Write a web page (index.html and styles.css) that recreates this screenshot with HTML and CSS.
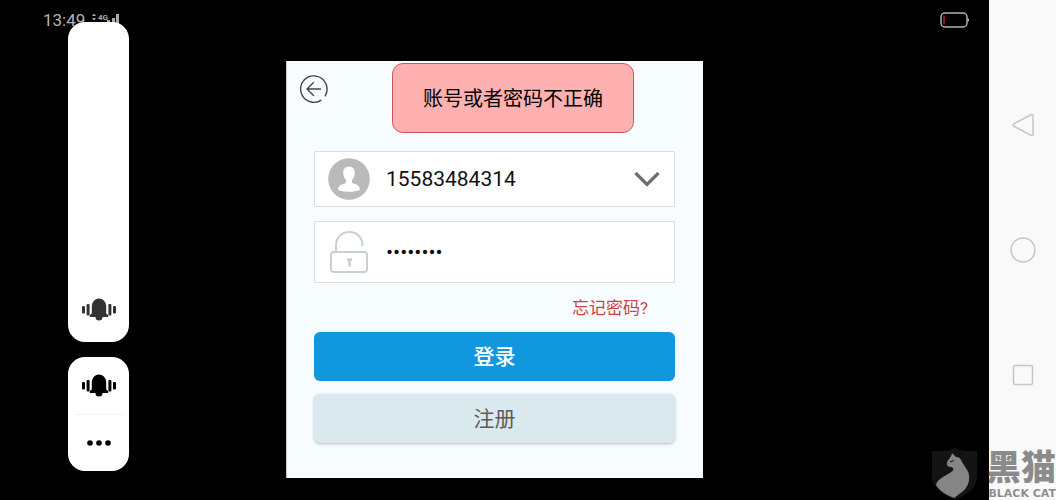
FILE: index.html
```html
<!DOCTYPE html>
<html lang="zh-CN">
<head>
  <meta charset="UTF-8" />
  <meta name="viewport" content="width=device-width, initial-scale=1.0"/>
  <title>登录</title>
  <link rel="stylesheet" href="styles.css">
</head>
<body>

<div class="screen">
  <!-- Status bar -->
  <header class="status-bar">
    <div class="status-left">
      <span class="clock">13:49</span>
      <svg class="signal" width="30" height="16" viewBox="0 0 30 16">
        <path d="M3 4l2-2.500 2 2.500zM3 6l2 2.500 2-2.500z" fill="#aaa"/>
        <text x="9" y="8" class="net">4G</text>
        <path d="M13 11h3v5h-3zM18 8h3v8h-3zM23 6h3v10h-3zM27 2h3v14h-3z" fill="#aaa"/>
      </svg>
    </div>
    <svg class="battery" width="29" height="16" viewBox="0 0 29 16">
      <rect x="1" y="1" width="26" height="14" rx="4" fill="none" stroke="#b4b0b0" stroke-width="1.500"/>
      <path d="M27.500 6v4l1.500-1v-2z" fill="#b4b0b0"/>
      <path d="M4 3.500v9" stroke="#8c1626" stroke-width="2"/>
    </svg>
  </header>

  <!-- Login -->
  <main class="stage">
    <form class="login">
      <div class="login-top">
        <button type="button" class="icon-btn" aria-label="返回">
          <svg width="28" height="28" viewBox="0 0 28 28" fill="none" stroke="#444" stroke-width="1.400" stroke-linecap="round">
            <path d="M25.200 20.800A13.200 13.200 0 1 0 20.800 25.300"/>
            <path d="M20.500 14H7.500M13.500 7.500L7 14l6.500 6.500"/>
          </svg>
        </button>
        <div class="toast" role="alert">账号或者密码不正确</div>
      </div>

      <div class="field">
        <label for="account" aria-label="账号">
          <svg width="42" height="42" viewBox="0 0 42 42">
            <circle cx="21" cy="21" r="20.800" fill="#bababa"/>
            <path d="M21 8.500c3.800 0 6 2.800 5.800 6.700-.1 3-1.300 5.300-2.800 6.500v3c1.200 1.200 7.800 1.300 7.800 6.300 0 1.800-4.800 2.700-10.800 2.700s-10.800-.9-10.800-2.700c0-5 6.600-5.100 7.800-6.300v-3c-1.500-1.200-2.700-3.500-2.800-6.500-.2-3.900 2-6.700 5.800-6.700z" fill="#fff"/>
          </svg>
        </label>
        <input id="account" type="text" value="15583484314">
        <button type="button" class="icon-btn" aria-label="选择账号">
          <svg width="28" height="18" viewBox="0 0 28 18">
            <path d="M2.500 3L14 14.500 25.500 3" fill="none" stroke="#6e6e6e" stroke-width="3.200"/>
          </svg>
        </button>
      </div>

      <div class="field field-password">
        <label for="password" aria-label="密码">
          <svg width="42" height="44" viewBox="0 0 42 44" fill="none" stroke="#c8d1d1" stroke-width="2">
            <rect x="3" y="22" width="36" height="20" rx="3"/>
            <path d="M8 22v-6.500C8 7.500 13.500 2 21.500 2 29 2 34.500 7.500 34.500 16"/>
            <path d="M19 29.500h5M21.500 29.500v7" stroke-width="2.500"/>
          </svg>
        </label>
        <input id="password" type="password" value="12345678">
      </div>

      <a href="#" class="forgot">忘记密码?</a>
      <button type="submit" class="btn btn-login">登录</button>
      <button type="button" class="btn btn-register">注册</button>
    </form>
  </main>

  <!-- Volume panel -->
  <aside class="volume">
    <div class="panel volume-track">
      <svg width="34" height="24" viewBox="0 0 34 24" fill="#333">
        <path d="M9.800 15.500V8a7.200 7.500 0 0 1 14.400 0v7.500l2 1.500v2h-5.700a3.500 3.500 0 0 1-7 0H7.800v-2z"/>
        <rect x="0" y="8" width="3" height="7.500" rx="1"/>
        <rect x="4.600" y="6" width="3" height="11.500" rx="1"/>
        <rect x="26.400" y="6" width="3" height="11.500" rx="1"/>
        <rect x="31" y="8" width="3" height="7.500" rx="1"/>
      </svg>
    </div>
    <div class="panel volume-menu">
      <button type="button" aria-label="铃声">
        <svg width="34" height="24" viewBox="0 0 34 24" fill="#000">
          <path d="M9.800 15.500V8a7.200 7.500 0 0 1 14.400 0v7.500l2 1.500v2h-5.700a3.500 3.500 0 0 1-7 0H7.800v-2z"/>
          <rect x="0" y="8" width="3" height="7.500" rx="1"/>
          <rect x="4.600" y="6" width="3" height="11.500" rx="1"/>
          <rect x="26.400" y="6" width="3" height="11.500" rx="1"/>
          <rect x="31" y="8" width="3" height="7.500" rx="1"/>
        </svg>
      </button>
      <button type="button" aria-label="更多">
        <svg width="26" height="6" viewBox="0 0 26 6">
          <circle cx="4" cy="3" r="2.800"/><circle cx="13" cy="3" r="2.800"/><circle cx="22" cy="3" r="2.800"/>
        </svg>
      </button>
    </div>
  </aside>
</div>

<!-- System navigation -->
<nav class="sys-nav">
  <button type="button" aria-label="后退">
    <svg width="26" height="26" viewBox="0 0 26 26"><path d="M21.500 2.500L3.500 12q-1.500 1 0 2l18 9.500q1.500.5 1.500-1V3.500q0-1.500-1.500-1z"/></svg>
  </button>
  <button type="button" aria-label="主页">
    <svg width="26" height="26" viewBox="0 0 26 26"><circle cx="13" cy="13" r="12"/></svg>
  </button>
  <button type="button" aria-label="任务">
    <svg width="26" height="26" viewBox="0 0 26 26"><rect x="3.500" y="3.500" width="19" height="19" rx="1.500"/></svg>
  </button>
</nav>

<!-- Watermark -->
<div class="watermark">
  <svg width="46" height="52" viewBox="0 0 46 52">
    <path d="M0 3q14 1 23-3 9 4 22 3v25q0 15-22 24Q0 43 0 28z" fill="#151313"/>
    <path d="M20 5l4 4c3 0 4 1 5 3 2 5 7 9 8 15 1 7-2 13-7 17-3 2-5 4-8 6C14 47 8 43 4 37c1-5 7-8 12-11 4-2 6-4 5-6-2-2-6 0-6-4 0-5 4-5 5-11z" fill="#858585"/>
    <path d="M18 14l4-1.500" stroke="#151313"/>
  </svg>
  <div class="brand">
    <span class="brand-cn">黑猫</span>
    <span class="brand-en">BLACK CAT</span>
  </div>
</div>

</body>
</html>
```
FILE: styles.css
```css
* {
  margin: 0;
  padding: 0;
  box-sizing: border-box;
}

body {
  display: flex;
  min-height: 100vh;
  position: relative;
  background: #000;
  font-family: Roboto, "Noto Sans CJK SC", sans-serif;
}

button {
  background: none;
  border: none;
  font-family: inherit;
  cursor: pointer;
}

svg {
  display: block;
}

.screen {
  flex: 1;
  position: relative;
  display: flex;
  flex-direction: column;
}

/* Status bar */
.status-bar {
  display: flex;
  justify-content: space-between;
  align-items: center;
  height: 39px;
  padding: 0 20px 0 43px;
}

.status-left {
  display: flex;
  align-items: center;
  gap: 4px;
}

.clock {
  color: #b4b4b4;
  font-size: 17px;
}

.net {
  fill: #aaa;
  font-size: 8px;
  font-weight: bold;
}

/* Login */
.stage {
  flex: 1;
  display: flex;
  justify-content: center;
  align-items: flex-start;
  padding: 22px 20px;
}

.login {
  display: flex;
  flex-direction: column;
  width: 100%;
  max-width: 417px;
  padding: 2px 28px 35px 27px;
  background: #f6fcff;
  border-left: 1px solid #c4c4c4;
}

.login-top {
  display: flex;
  align-items: flex-start;
  gap: 64px;
  margin: 0 0 18px -14px;
}

.login-top .icon-btn {
  padding-top: 12px;
}

.toast {
  padding: 21px 30px 19px;
  background: #ffb1b1;
  border: 1px solid #cf5560;
  border-radius: 11px;
  font-size: 20px;
  line-height: 28px;
  white-space: nowrap;
}

.field {
  display: flex;
  align-items: center;
  gap: 16px;
  height: 56px;
  margin-bottom: 14px;
  padding: 0 13px;
  background: #fff;
  border: 1px solid #dcdfe1;
  border-radius: 1px;
}

.field-password {
  height: 62px;
}

.field input {
  flex: 1;
  min-width: 0;
  border: none;
  outline: none;
  background: none;
  color: #111;
  font-family: inherit;
  font-size: 21px;
}

.forgot {
  align-self: flex-end;
  margin: 0 27px 12px 0;
  color: #cb4444;
  font-size: 17px;
  line-height: 23px;
  text-decoration: none;
}

.btn {
  height: 49px;
  padding-bottom: 3px;
  border-radius: 6px;
  font-size: 21px;
}

.btn-login {
  margin-bottom: 13px;
  background: #1097dd;
  color: #fff;
  font-weight: 500;
}

.btn-register {
  background: #dae9ee;
  color: #5c5c5c;
  box-shadow: 0 1px 3px rgba(0, 0, 0, 0.25);
}

/* Volume panel */
.volume {
  position: absolute;
  left: 68px;
  top: 22px;
  display: flex;
  flex-direction: column;
  gap: 15px;
  width: 61px;
}

.panel {
  display: flex;
  flex-direction: column;
  align-items: center;
  background: #fff;
  border-radius: 17px;
}

.volume-track {
  justify-content: flex-end;
  height: 320px;
  padding-bottom: 20px;
}

.volume-menu button {
  display: flex;
  justify-content: center;
  align-items: center;
  width: 48px;
  height: 57px;
}

.volume-menu button + button {
  border-top: 1px solid #f2f2f2;
}

/* System navigation */
.sys-nav {
  display: flex;
  flex-direction: column;
  justify-content: center;
  align-items: center;
  gap: 99px;
  width: 67px;
  background: #f9f9f9;
}

.sys-nav svg {
  fill: none;
  stroke: #c6c6c6;
  stroke-width: 1.5;
}

/* Watermark */
.watermark {
  position: absolute;
  right: 0;
  bottom: 0;
  display: flex;
  align-items: flex-end;
  gap: 8px;
}

.brand {
  display: flex;
  flex-direction: column;
  align-items: flex-end;
  color: rgba(30, 30, 30, 0.5);
  font-weight: 900;
  white-space: nowrap;
}

.brand-cn {
  font-size: 35px;
  line-height: 36px;
}

.brand-en {
  font-family: "DejaVu Sans", sans-serif;
  font-size: 11px;
  line-height: 13px;
}
```
